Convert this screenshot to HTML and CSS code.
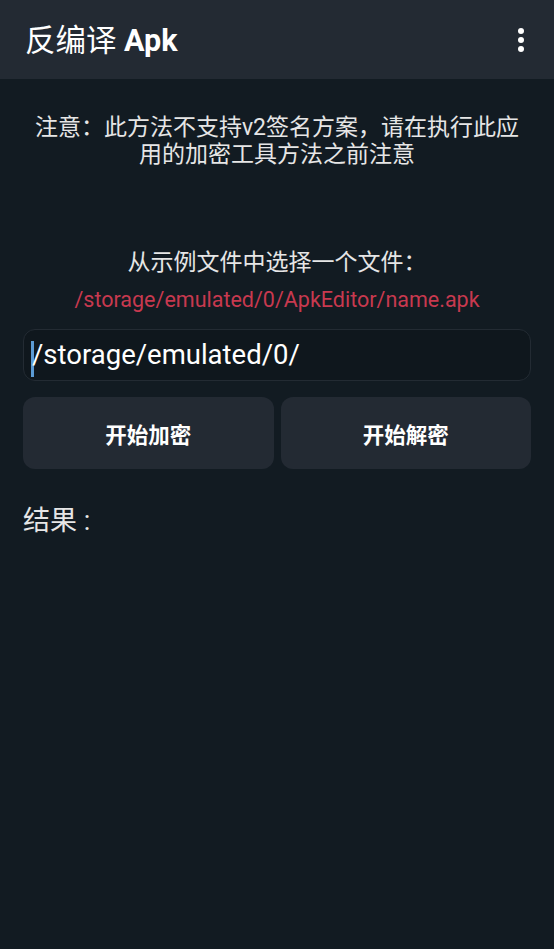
FILE: index.html
```html
<!DOCTYPE html>
<html lang="zh-CN">
<head>
<meta charset="utf-8">
<title>反编译 Apk</title>
<link rel="stylesheet" href="styles.css">
</head>
<body>
<div class="app">
  <header class="toolbar">
    <h1 class="title">反编译 <b>Apk</b></h1>
    <div class="menu" aria-label="更多">
      <span class="dot"></span><span class="dot"></span><span class="dot"></span>
    </div>
  </header>
  <main class="content">
    <p class="notice">注意：此方法不支持v2签名方案，请在执行此应用的加密工具方法之前注意</p>
    <p class="hint">从示例文件中选择一个文件：</p>
    <p class="example">/storage/emulated/0/ApkEditor/name.apk</p>
    <div class="field"><span class="caret"></span><span class="field-text">/storage/emulated/0/</span></div>
    <div class="actions">
      <button class="btn">开始加密</button>
      <button class="btn">开始解密</button>
    </div>
    <p class="result">结果 :</p>
  </main>
</div>
</body>
</html>
```
FILE: styles.css
```css
html, body {
  margin: 0;
  padding: 0;
  height: 100%;
}
body {
  background: #121b22;
  font-family: Roboto, "Noto Sans CJK SC", sans-serif;
  color: #e8e8e8;
}
.app {
  min-height: 100%;
  display: flex;
  flex-direction: column;
}
.toolbar {
  height: 79px;
  background: #232a33;
  display: flex;
  align-items: center;
  justify-content: space-between;
  padding: 0 30px 0 25px;
  box-sizing: border-box;
}
.title {
  margin: 0;
  font-size: 30.5px;
  font-weight: 400;
  color: #ffffff;
  line-height: 1;
  padding-top: 3px;
}
.title b {
  font-weight: 700;
}
.menu {
  display: flex;
  flex-direction: column;
  gap: 3px;
  padding-top: 1px;
}
.dot {
  width: 6px;
  height: 6px;
  border-radius: 50%;
  background: #ffffff;
}
.content {
  padding: 35px 23px 0 23px;
  display: flex;
  flex-direction: column;
}
.notice {
  margin: 0;
  font-size: 23px;
  line-height: 27px;
  text-align: center;
  color: #e6e6e6;
  padding: 0 6px;
}
.hint {
  margin: 81px 0 0 0;
  font-size: 23px;
  line-height: 28px;
  text-align: center;
  color: #e6e6e6;
}
.example {
  margin: 10px 0 0 0;
  font-size: 21.5px;
  line-height: 26px;
  text-align: center;
  color: #c8394f;
}
.field {
  margin-top: 16px;
  height: 52px;
  box-sizing: border-box;
  border: 1px solid #232b33;
  border-radius: 12px;
  background: #0f171d;
  display: flex;
  align-items: center;
  padding-left: 7px;
}
.caret {
  width: 3px;
  height: 36px;
  background: #5b9bd5;
  margin-right: -2px;
  margin-top: 7px;
}
.field-text {
  font-size: 27.5px;
  color: #ffffff;
  line-height: 1;
}
.actions {
  margin-top: 16px;
  display: grid;
  grid-template-columns: 1fr 1fr;
  gap: 7px;
}
.btn {
  height: 72px;
  border: none;
  border-radius: 12px;
  background: #232a33;
  color: #ffffff;
  font-family: Roboto, "Noto Sans CJK SC", sans-serif;
  font-size: 21.5px;
  font-weight: 700;
  padding: 0;
}
.result {
  margin: 37px 0 0 0;
  font-size: 27px;
  line-height: 30px;
  color: #e6e6e6;
}
```
